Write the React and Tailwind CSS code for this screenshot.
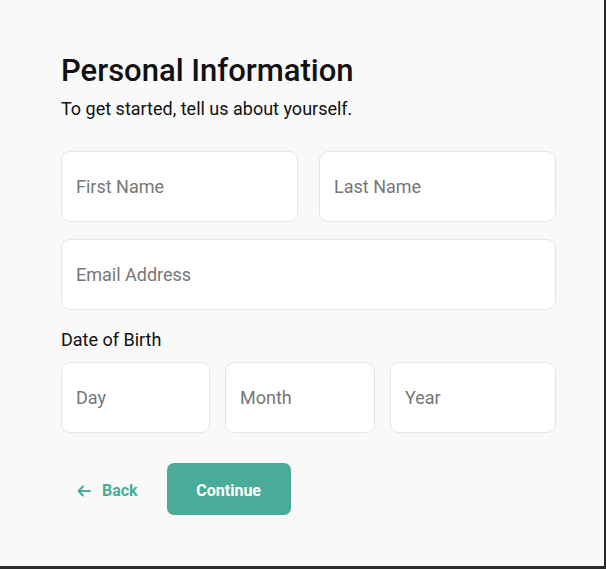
import React from 'react';

const Field = ({ placeholder, className = '' }) => (
  <input
    type="text"
    placeholder={placeholder}
    className={`h-[71px] w-full rounded-[9px] border border-[#e6e6e6] bg-white px-[14px] text-[18px] text-[#1a1a1a] placeholder:text-[#777] focus:outline-none ${className}`}
  />
);

const App = () => {
  return (
    <div className="min-h-screen bg-[#2a2a2a]" style={{ fontFamily: 'Roboto, "Liberation Sans", sans-serif' }}>
      <div className="h-[566px] w-[604px] bg-[#f9f9f9] px-[61px] pt-[52px]">
        <h1 className="text-[31px] font-medium leading-[38px] text-[#111]">Personal Information</h1>
        <p className="mt-[8px] text-[18px] leading-[22px] text-[#111]">To get started, tell us about yourself.</p>

        <form className="mt-[31px] w-[495px]">
          <div className="grid grid-cols-2 gap-x-[21px]">
            <Field placeholder="First Name" />
            <Field placeholder="Last Name" />
          </div>
          <div className="mt-[17px]">
            <Field placeholder="Email Address" />
          </div>

          <label className="mt-[19px] block text-[18px] leading-[22px] text-[#111]">Date of Birth</label>
          <div className="mt-[11px] flex">
            <Field placeholder="Day" className="!w-[149px] shrink-0" />
            <Field placeholder="Month" className="ml-[15px] !w-[150px] shrink-0" />
            <Field placeholder="Year" className="ml-[15px] flex-1" />
          </div>

          <div className="mt-[30px] flex items-center gap-[29px]">
            <button type="button" className="flex items-center gap-[11px] pl-[16px] pt-[3px] text-[16px] font-bold text-[#4aac98]">
              <svg width="14" height="12" viewBox="0 0 14 12" fill="none" stroke="currentColor" strokeWidth="2" strokeLinecap="round" strokeLinejoin="round">
                <path d="M13 6H1.5M6 1.5L1.5 6L6 10.5" />
              </svg>
              Back
            </button>
            <button type="submit" className="h-[52px] w-[124px] rounded-[7px] bg-[#4aac98] pt-[3px] text-[16px] font-bold text-white">
              Continue
            </button>
          </div>
        </form>
      </div>
    </div>
  );
};

export default App;
